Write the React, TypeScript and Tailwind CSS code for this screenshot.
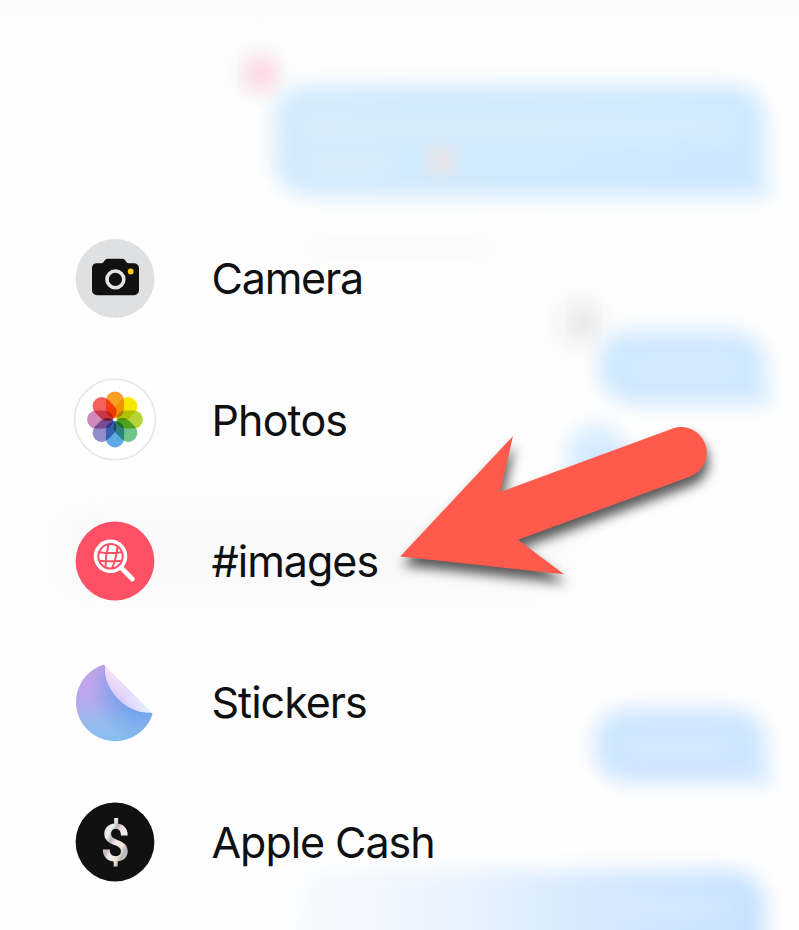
import React from "react";

function CameraIcon() {
  return (
    <svg viewBox="-42 -42.500 84 84" className="size-[84px] shrink-0">
      <circle r="39.400" fill="#dfe0e2" />
      <path d="M-18.500 -15.300H-13.500C-10.500 -15.300 -11 -19.800 -7.200 -19.800H7.200C11 -19.800 10.500 -15.300 13.500 -15.300H19A5 5 0 0 1 24 -10.300V11.800A5 5 0 0 1 19 16.800H-18A5 5 0 0 1 -23 11.800V-10.800A4.500 4.500 0 0 1 -18.500 -15.300Z" fill="#111112" />
      <circle cx="0.400" cy="0.900" r="8.400" fill="none" stroke="#e3e4e6" strokeWidth="3.600" />
      <circle cx="15.700" cy="-7" r="2.900" fill="#ffcc0a" />
    </svg>
  );
}

const petals = [
  { angle: 0, color: "#fb9f24" },
  { angle: 45, color: "#f8e800" },
  { angle: 90, color: "#b6d638" },
  { angle: 135, color: "#70c48a" },
  { angle: 180, color: "#5eaae2" },
  { angle: 225, color: "#918dca" },
  { angle: 270, color: "#cf8abb" },
  { angle: 315, color: "#f8625e" },
];

function PhotosIcon() {
  return (
    <svg viewBox="-42 -41.500 84 84" className="size-[84px] shrink-0 isolate">
      <circle r="40.400" fill="#fff" stroke="#e8e8ea" strokeWidth="1.900" />
      {petals.map((p) => (
        <rect key={p.angle} x="-9.100" y="-27.900" width="18.200" height="26.500" rx="9.100" fill={p.color} transform={`rotate(${p.angle})`} className="mix-blend-multiply" />
      ))}
      <circle r="1.800" fill="#fff" />
    </svg>
  );
}

function ImagesIcon() {
  return (
    <svg viewBox="-42 -42 84 84" className="size-[84px] shrink-0">
      <circle r="39.400" fill="#ff5066" />
      <circle cx="-4.500" cy="-4.700" r="16.800" fill="#fff" />
      <path d="M7 7.500L17.300 18" stroke="#fff" strokeWidth="4.800" strokeLinecap="round" />
      <g fill="none" stroke="#ff5066" strokeWidth="2">
        <circle cx="-4.500" cy="-4.700" r="12.200" />
        <path d="M-15.500 -8.800Q-4 -7 6.500 -8.800M-15.500 -0.300Q-4 1 6.500 -0.300M-6.500 -16.500Q-9.500 -5 -9.500 6M2.500 -15.500Q1.500 -3 -3 7.500" />
      </g>
    </svg>
  );
}

function StickersIcon() {
  return (
    <svg viewBox="-42 -42 84 84" className="size-[84px] shrink-0">
      <defs>
        <linearGradient id="sticker" x1="0.350" y1="0" x2="0.550" y2="1">
          <stop offset="0" stopColor="#c5a3ea" />
          <stop offset="0.400" stopColor="#b8a8ec" />
          <stop offset="0.720" stopColor="#97bcee" />
          <stop offset="1" stopColor="#85bdef" />
        </linearGradient>
        <radialGradient id="shade" gradientUnits="userSpaceOnUse" cx="28" cy="-14" r="54">
          <stop offset="0.450" stopColor="#6299ee" stopOpacity="0.700" />
          <stop offset="1" stopColor="#6f9cf0" stopOpacity="0" />
        </radialGradient>
        <linearGradient id="fold" gradientUnits="userSpaceOnUse" x1="-10" y1="-32" x2="34" y2="12">
          <stop offset="0" stopColor="#f4d5f6" />
          <stop offset="0.500" stopColor="#e3d0fa" />
          <stop offset="1" stopColor="#d9effc" />
        </linearGradient>
        <linearGradient id="sheen" gradientUnits="userSpaceOnUse" x1="1" y1="-1" x2="13" y2="-13">
          <stop offset="0" stopColor="#c2b3fa" stopOpacity="0.650" />
          <stop offset="1" stopColor="#fff" stopOpacity="0.200" />
        </linearGradient>
      </defs>
      <g transform="translate(0.300 0)">
        <path d="M-13 -37A39.200 39.200 0 1 0 36.700 13.500Q37.800 10.400 35 10.400C12 12 -12 -12 -10 -35Q-10.500 -37.800 -13 -37Z" fill="url(#sticker)" />
        <path d="M-13 -37A39.200 39.200 0 1 0 36.700 13.500Q37.800 10.400 35 10.400C12 12 -12 -12 -10 -35Q-10.500 -37.800 -13 -37Z" fill="url(#shade)" />
        <path d="M-10.500 -36.500L37 11Q36.500 10.300 35 10.400C12 12 -12 -12 -10 -35Z" fill="url(#fold)" />
        <path d="M-10.500 -36.500L37 11Q36.500 10.300 35 10.400C12 12 -12 -12 -10 -35Z" fill="url(#sheen)" />
      </g>
    </svg>
  );
}

function CashIcon() {
  return (
    <svg viewBox="-42 -42 84 84" className="size-[84px] shrink-0">
      <defs>
        <linearGradient id="foil" x1="0" y1="0" x2="1" y2="1">
          <stop offset="0" stopColor="#c4c4c7" />
          <stop offset="0.300" stopColor="#f4f4f5" />
          <stop offset="0.400" stopColor="#b5b4b9" />
          <stop offset="0.480" stopColor="#f5dfe6" />
          <stop offset="0.540" stopColor="#eeeeef" />
          <stop offset="0.640" stopColor="#f3e6cf" />
          <stop offset="0.720" stopColor="#b9b7be" />
          <stop offset="1" stopColor="#e8e8ea" />
        </linearGradient>
      </defs>
      <circle r="39.400" fill="#111112" />
      <text transform="translate(0.300 19)" textAnchor="middle" fontSize="52" fill="url(#foil)" className="font-['Roboto',sans-serif] font-semibold">$</text>
    </svg>
  );
}

const apps = [
  { name: "Camera", icon: <CameraIcon />, tracking: "tracking-[-1.200px]" },
  { name: "Photos", icon: <PhotosIcon />, tracking: "tracking-[-0.850px]" },
  { name: "#images", icon: <ImagesIcon />, tracking: "tracking-[-1px]" },
  { name: "Stickers", icon: <StickersIcon />, tracking: "tracking-[-1px]" },
  { name: "Apple Cash", icon: <CashIcon />, tracking: "tracking-[-1.050px]" },
];

function Conversation() {
  return (
    <svg viewBox="0 0 799 930" className="absolute inset-0 h-[930px] w-[799px]">
      <defs>
        <filter id="b" x="-30%" y="-60%" width="160%" height="220%" colorInterpolationFilters="sRGB"><feGaussianBlur stdDeviation="10" /></filter>
        <filter id="soft" x="-50%" y="-100%" width="200%" height="300%" colorInterpolationFilters="sRGB"><feGaussianBlur stdDeviation="15" /></filter>
        <linearGradient id="msg" x1="0" x2="1" y2="0.300"><stop offset="0" stopColor="#d3ebfc" /><stop offset="1" stopColor="#cde8fe" /></linearGradient>
        <linearGradient id="last" x1="0" x2="1"><stop offset="0" stopColor="#f6faff" /><stop offset="0.300" stopColor="#ebf4fe" /><stop offset="0.650" stopColor="#d4e8fe" /><stop offset="1" stopColor="#c6e1ff" /></linearGradient>
      </defs>
      <g filter="url(#soft)">
        <rect x="-40" y="-30" width="880" height="42" fill="#f9f9fa" />
        <rect x="45" y="495" width="530" height="115" rx="30" fill="#fafafb" />
        <circle cx="258" cy="72" r="24" fill="#f5f3f4" />
        <circle cx="580" cy="322" r="27" fill="#f2f2f2" />
      </g>
      <g filter="url(#b)">
        <path d="M310 85H725Q765 85 765 125V175Q766 188 774 196H310Q274 192 274 157V121Q274 85 310 85Z" fill="url(#msg)" />
        <path d="M635 331H730Q766 333 766 367V390L775 404H635Q598 400 598 367Q598 331 635 331Z" fill="#cfe8fe" />
        <path d="M630 709H730Q766 711 766 746V769L775 783H630Q594 780 594 746Q594 709 630 709Z" fill="#cde5ff" />
        <circle cx="597" cy="456" r="31" fill="#d6ecfe" />
        <path d="M330 870H725Q765 870 765 910V980H296V906Q296 870 330 870Z" fill="url(#last)" />
        <rect x="305" y="240" width="190" height="16" fill="#f7f7f7" />
        <rect x="306" y="665" width="180" height="16" fill="#fbfbfc" />
        <path d="M305 128H730M305 164H395" stroke="#dff1fe" strokeWidth="11" />
        <path d="M635 368H735M625 746H730M620 907H730" stroke="#d8ebfd" strokeWidth="12" />
      </g>
      <circle cx="261" cy="74" r="15" fill="#ffd0de" filter="url(#b)" />
      <circle cx="584" cy="323" r="11" fill="#e0e0e0" filter="url(#b)" />
      <circle cx="441" cy="160" r="13" fill="#f5e3de" filter="url(#b)" />
    </svg>
  );
}

function Arrow() {
  return (
    <svg viewBox="0 0 799 930" className="pointer-events-none absolute inset-0 h-[930px] w-[799px]">
      <path d="M400.200 556.600L513 436L500.300 492L672.800 428.500A25.530 25.530 0 0 1 690.200 476.500L518 539.800L564 574.300Z" fill="#ff5a4c" className="drop-shadow-[2px_9px_6px_rgba(0,0,0,0.65)]" />
    </svg>
  );
}

export default function App() {
  return (
    <main className="relative h-[930px] w-[799px] overflow-hidden bg-[#fefefe]">
      <Conversation />
      <ul className="relative flex flex-col pt-[207.600px] pl-[73px] font-['Inter',sans-serif] text-[43px] leading-[50px] text-[#0f1011]">
        {apps.map((app) => (
          <li key={app.name} className="flex h-[141.300px] items-center gap-[54.500px] last:h-[139px]">
            {app.icon}
            <span className={app.tracking}>{app.name}</span>
          </li>
        ))}
      </ul>
      <Arrow />
    </main>
  );
}
